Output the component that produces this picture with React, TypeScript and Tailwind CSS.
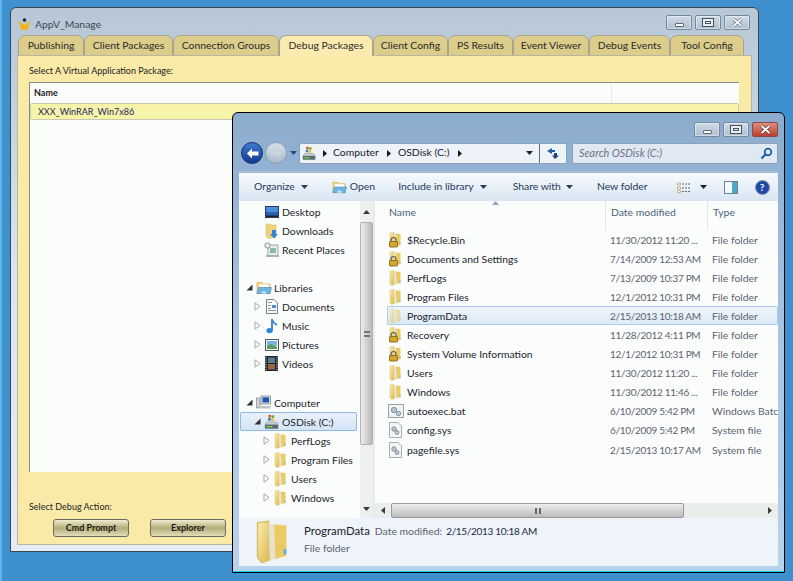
import React from "react";

const font = { fontFamily: 'Lato, "Open Sans", sans-serif' };

function Folder({ size = 16, faded = false, lock = false }: { size?: number; faded?: boolean; lock?: boolean }) {
  return (
    <svg width={size} height={size} viewBox="0 0 16 16" className="shrink-0" style={{ opacity: faded ? 0.55 : 1 }}>
      <defs>
        <linearGradient id="fg" x1="0" y1="0" x2="1" y2="1">
          <stop offset="0" stopColor="#fbeeb0" />
          <stop offset="1" stopColor="#dcb64a" />
        </linearGradient>
      </defs>
      <path d="M2 1 L6 0.5 L6.5 14.5 L3.5 15.5 L2 13.5 Z" fill="url(#fg)" stroke="#d8bd6a" strokeWidth="0.5" />
      <path d="M6 1.5 L8 1.5 L8.5 14 L6.5 14.7 Z" fill="#e6e2cc" />
      <path d="M8 1.5 L12.5 2 L12.5 13 L8.5 14.2 Z" fill="#ecca62" />
      <rect x="11.5" y="10.5" width="1" height="2" fill="#5db6e8" />
      {lock && (
        <g>
          <path d="M3 9.5 V8 a2.5 2.5 0 0 1 5 0 V9.5" fill="none" stroke="#5a5a4a" strokeWidth="1.2" />
          <rect x="1.5" y="9.5" width="8" height="5.5" rx="0.5" fill="#d8a52a" stroke="#6b5312" strokeWidth="0.7" />
        </g>
      )}
    </svg>
  );
}

function OpenFolder({ size = 16 }: { size?: number }) {
  return (
    <svg width={size} height={size} viewBox="0 0 16 16" className="shrink-0">
      <path d="M1 2.5 H6 L7 4 H14 V13.5 H1 Z" fill="#f1d67c" stroke="#c9a74a" strokeWidth="0.6" />
      <rect x="3" y="4.5" width="10" height="3" fill="#fff" />
      <path d="M1 13.5 L2.5 7.5 H15.5 L14 13.5 Z" fill="#6fb5e6" stroke="#3e86bd" strokeWidth="0.6" />
      <path d="M5 13.5 Q8 9 11 13.5 Z" fill="#cfe8f8" />
    </svg>
  );
}

function Drive({ size = 18 }: { size?: number }) {
  return (
    <svg width={size} height={size} viewBox="0 0 18 18" className="shrink-0">
      <rect x="5" y="1" width="3" height="3" fill="#e2552a" />
      <rect x="8.5" y="1.5" width="3" height="3" fill="#6fae2d" />
      <rect x="4.5" y="4.5" width="3" height="3" fill="#2f7dd1" />
      <rect x="8" y="5" width="3" height="3" fill="#eebb23" />
      <path d="M3 9 H14 L16 12 H1 Z" fill="#c8ced2" stroke="#7c858a" strokeWidth="0.5" />
      <rect x="1" y="12" width="15" height="4.5" rx="0.5" fill="#5c6b71" />
      <rect x="2.5" y="13.5" width="7" height="1.5" fill="#79d145" />
    </svg>
  );
}

function Desktop() {
  return (
    <svg width="14" height="12" viewBox="0 0 14 12" className="shrink-0">
      <rect x="0.5" y="0.5" width="13" height="11" fill="#2a62b3" stroke="#2c3a52" />
      <rect x="1" y="1" width="12" height="5" fill="#4c8fdc" />
      <rect x="1" y="9.5" width="12" height="1.5" fill="#1c2433" />
    </svg>
  );
}

function Downloads() {
  return (
    <svg width="14" height="16" viewBox="0 0 14 16" className="shrink-0">
      <path d="M1 1 H5 L6 2 H11 V14 L3 15.5 L1 13 Z" fill="#ecd27a" stroke="#cdb15c" strokeWidth="0.5" />
      <path d="M7 7 H11 V11 H13 L9 15.5 L5 11 H7 Z" fill="#2f83d2" />
    </svg>
  );
}

function Recent() {
  return (
    <svg width="16" height="16" viewBox="0 0 16 16" className="shrink-0">
      <rect x="4" y="3" width="10" height="11" fill="#e7ecef" stroke="#9aa5ab" />
      <rect x="6" y="6" width="6" height="5" fill="#8fb9a5" />
      <circle cx="3.5" cy="3.5" r="2.6" fill="#eef2f3" stroke="#7f8a90" />
      <rect x="2" y="13" width="13" height="2" fill="#a9b3b8" />
    </svg>
  );
}

function Doc() {
  return (
    <svg width="12" height="15" viewBox="0 0 12 15" className="shrink-0">
      <path d="M0.5 0.5 H8 L11.5 4 V14.5 H0.5 Z" fill="#f7f8fa" stroke="#77808a" />
      <rect x="2" y="3" width="4" height="1" fill="#8a939b" />
      <rect x="6" y="6" width="4" height="3" fill="#4d8ed0" />
      <rect x="2" y="6" width="3" height="1" fill="#8a939b" />
      <rect x="2" y="9" width="3" height="1" fill="#8a939b" />
      <rect x="2" y="11" width="8" height="1" fill="#8a939b" />
    </svg>
  );
}

function Music() {
  return (
    <svg width="12" height="16" viewBox="0 0 12 16" className="shrink-0">
      <path d="M6 1 V12" stroke="#2266b8" strokeWidth="1.6" />
      <path d="M6 1 Q7 5 11 7" stroke="#3a8ad8" strokeWidth="1.6" fill="none" />
      <ellipse cx="3.6" cy="12.6" rx="3.2" ry="2.6" fill="#2f86d8" />
    </svg>
  );
}

function Pictures() {
  return (
    <svg width="14" height="12" viewBox="0 0 14 12" className="shrink-0">
      <rect x="0.5" y="0.5" width="13" height="11" fill="#f3f5f6" stroke="#4f5a63" />
      <rect x="2" y="2" width="10" height="5" fill="#7fb4e0" />
      <path d="M2 10 V7 L6 5 L12 8 V10 Z" fill="#5c9a58" />
    </svg>
  );
}

function Videos() {
  return (
    <svg width="13" height="15" viewBox="0 0 13 15" className="shrink-0">
      <rect x="0" y="0" width="13" height="15" fill="#1d2530" />
      <rect x="3" y="1.5" width="7" height="5.5" fill="#5c7e8c" />
      <rect x="3" y="8" width="7" height="5.5" fill="#a0653c" />
      <path d="M1 1 V14 M12 1 V14" stroke="#e6e6e6" strokeWidth="1" strokeDasharray="1.2 1.2" />
    </svg>
  );
}

function Computer() {
  return (
    <svg width="15" height="15" viewBox="0 0 15 15" className="shrink-0">
      <rect x="5" y="1" width="9.5" height="8" fill="#dfe4e7" stroke="#59646b" strokeWidth="0.6" />
      <rect x="6.5" y="2.3" width="6.5" height="5.2" fill="#1d55b4" />
      <rect x="0.5" y="3" width="3.5" height="10" fill="#cfd4d6" stroke="#70797f" strokeWidth="0.6" />
      <rect x="5" y="11" width="9.5" height="2.5" fill="#bdc3c6" />
    </svg>
  );
}

function FileBat() {
  return (
    <svg width="16" height="16" viewBox="0 0 16 16" className="shrink-0">
      <rect x="0.5" y="1.5" width="15" height="13" fill="#f0f2f4" stroke="#98a2a9" />
      <circle cx="6" cy="7" r="2.6" fill="#b9c7d1" stroke="#7e8e98" />
      <circle cx="10.5" cy="10.5" r="2.2" fill="#c4d0d8" stroke="#7e8e98" />
    </svg>
  );
}

function FileSys() {
  return (
    <svg width="13" height="16" viewBox="0 0 13 16" className="shrink-0">
      <path d="M0.5 0.5 H9 L12.5 4 V15.5 H0.5 Z" fill="#f4f5f7" stroke="#a4adb3" />
      <circle cx="5" cy="7" r="2.2" fill="#bcc8d2" stroke="#7e8e98" />
      <circle cx="8" cy="10.5" r="1.9" fill="#c4d0d8" stroke="#7e8e98" />
    </svg>
  );
}

function TreeArrow({ open = false }: { open?: boolean }) {
  return (
    <svg width="7" height="9" viewBox="0 0 7 9" className="shrink-0">
      {open ? (
        <path d="M6.5 1.5 V7.5 H0.5 Z" fill="#333" />
      ) : (
        <path d="M1 0.8 L6 4.5 L1 8.2 Z" fill="#fff" stroke="#a6a6a6" />
      )}
    </svg>
  );
}

function Caret({ color = "#2a3d5a" }: { color?: string }) {
  return (
    <svg width="7" height="4" viewBox="0 0 7 4" className="shrink-0">
      <path d="M0 0 H7 L3.5 4 Z" fill={color} />
    </svg>
  );
}

function Chevron() {
  return (
    <svg width="4" height="7" viewBox="0 0 4 7" className="shrink-0">
      <path d="M0 0 L4 3.5 L0 7 Z" fill="#1b1b1b" />
    </svg>
  );
}

function Glyph({ kind, dark }: { kind: "min" | "max" | "close"; dark?: boolean }) {
  if (kind === "min")
    return <div className="mt-[5px] h-[4px] w-[9px] rounded-[1px] border border-[#5d6a78] bg-white" />;
  if (kind === "max")
    return (
      <div className="flex h-[9px] w-[12px] items-center justify-center border border-[#46525e] bg-[#e8edf2]">
        <div className="h-[3px] w-[6px] border border-[#46525e]" />
      </div>
    );
  return (
    <svg width="11" height="9" viewBox="0 0 11 9">
      <path d="M1.5 1 L9.5 8 M9.5 1 L1.5 8" stroke={dark ? "#55616d" : "#4b3030"} strokeWidth="3" />
      <path d="M1.5 1 L9.5 8 M9.5 1 L1.5 8" stroke="#fff" strokeWidth="1.8" />
    </svg>
  );
}

function CaptionButtons({ front }: { front?: boolean }) {
  const base =
    "flex items-center justify-center border border-[#75889c] bg-gradient-to-b from-[#cfdae6] to-[#aebfd0] shadow-[inset_0_0_0_1px_rgba(255,255,255,0.45)]";
  return (
    <div className="flex gap-[3px]">
      <div className={`h-[15px] w-[26px] rounded-[2px] ${base}`}>
        <Glyph kind="min" />
      </div>
      <div className={`h-[15px] w-[26px] rounded-[2px] ${base}`}>
        <Glyph kind="max" />
      </div>
      {front ? (
        <div className="flex h-[15px] w-[26px] items-center justify-center rounded-[2px] border border-[#8d4a44] bg-gradient-to-b from-[#dc8d7e] to-[#bd3c2e]">
          <Glyph kind="close" />
        </div>
      ) : (
        <div className={`h-[15px] w-[26px] rounded-[2px] ${base}`}>
          <Glyph kind="close" dark />
        </div>
      )}
    </div>
  );
}

const tabs = [
  ["Publishing", "w-[66px]"],
  ["Client Packages", "w-[89px]"],
  ["Connection Groups", "w-[106px]"],
  ["Debug Packages", "w-[94px]"],
  ["Client Config", "w-[75px]"],
  ["PS Results", "w-[65px]"],
  ["Event Viewer", "w-[76px]"],
  ["Debug Events", "w-[81px]"],
  ["Tool Config", "w-[74px]"],
] as const;

function AppWindow() {
  return (
    <div className="absolute left-[10px] top-[7px] flex h-[545px] w-[749px] flex-col rounded-t-[6px] border border-[#3c4650] bg-gradient-to-b from-[#b7c7d6] via-[#dce6f0] to-[#e4ecf4] px-[6px] pb-[6px]">
      <div className="flex h-[27px] shrink-0 items-start justify-between pr-[2px] pt-[7px]">
        <div className="flex items-center gap-[4px] pl-[1px] pt-[1px]">
          <svg width="13" height="13" viewBox="0 0 13 13">
            <circle cx="6.5" cy="2" r="1.7" fill="#222" />
            <path d="M0.5 3 L6.5 7 L12.5 3 L9.5 12 H3.5 Z" fill="#f3b516" />
          </svg>
          <span className="text-[10.4px] leading-[16px] text-[#3d4650]">AppV_Manage</span>
        </div>
        <CaptionButtons />
      </div>
      <div className="flex h-[21px] shrink-0 pl-[1px]">
        {tabs.map(([name, w]) => {
          const active = name === "Debug Packages";
          return (
            <div
              key={name}
              className={`flex items-center justify-center whitespace-nowrap rounded-t-[7px] border border-[#a8a48c] text-[10.4px] text-[#2b2b2b] ${w} ${
                active ? "z-10 border-b-0 bg-[#fbebb0]" : "bg-[#dccd8a]"
              }`}
            >
              {name}
            </div>
          );
        })}
      </div>
      <div className="-mt-[1px] flex min-h-0 flex-1 flex-col border border-[#b8b6a0] bg-[#f9eaa8] px-[11px]">
        <div className="h-[26px] shrink-0 pt-[9px] text-[9px] leading-[12px] text-[#222]">
          Select A Virtual Application Package:
        </div>
        <div className="flex h-[390px] w-[710px] shrink-0 flex-col border-l border-t border-[#8c8c88] bg-[#fbfdfb]">
          <div className="flex h-[20px] shrink-0 items-center">
            <div className="w-[581px] pl-[4px] text-[9px] font-bold leading-[12px] text-[#222]">Name</div>
            <div className="h-full border-l border-[#e8e8e4]" />
          </div>
          <div className="flex h-[17px] shrink-0 items-center rounded-[2px] border border-[#c8c8b4] bg-[#f7f3a8] pl-[7px] text-[9px] leading-[12px] text-[#26265c]">
            XXX_WinRAR_Win7x86
          </div>
        </div>
        <div className="h-[29px] shrink-0" />
        <div className="text-[9px] leading-[12px] text-[#222]">Select Debug Action:</div>
        <div className="mt-[6px] flex gap-[21px] pl-[24px]">
          {["Cmd Prompt", "Explorer"].map((b) => (
            <div
              key={b}
              className="flex h-[18px] w-[76px] items-center justify-center rounded-[3px] border border-[#6b6b60] bg-gradient-to-b from-[#f2eed2] via-[#b5ad78] to-[#e3ddb8] text-[9px] font-bold text-[#1a1a1a]"
            >
              {b}
            </div>
          ))}
        </div>
      </div>
    </div>
  );
}

function NavRow({ indent, arrow, icon, label, selected }: { indent: string; arrow?: "open" | "closed"; icon: React.ReactNode; label: string; selected?: boolean }) {
  return (
    <div
      className={`flex h-[19px] items-center text-[10.4px] leading-[16px] text-[#1c1c2a] ${indent} ${
        selected ? "mr-[3px] rounded-[2px] bg-gradient-to-b from-[#eaf2fa] to-[#d2e3f4] shadow-[inset_0_0_0_1px_#8fb9e0]" : ""
      }`}
    >
      <div className="flex w-[9px] shrink-0 items-center">{arrow && <TreeArrow open={arrow === "open"} />}</div>
      <div className="flex w-[17px] shrink-0 items-center justify-center">{icon}</div>
      <span className="ml-[2px] whitespace-nowrap">{label}</span>
    </div>
  );
}

function ScrollArrow({ dir }: { dir: "up" | "down" | "left" | "right" }) {
  const d = { up: "M0 4 L3.5 0 L7 4 Z", down: "M0 0 H7 L3.5 4 Z", left: "M4 0 V7 L0 3.5 Z", right: "M0 0 V7 L4 3.5 Z" }[dir];
  const horizontal = dir === "left" || dir === "right";
  return (
    <svg width={horizontal ? 4 : 7} height={horizontal ? 7 : 4} viewBox={horizontal ? "0 0 4 7" : "0 0 7 4"}>
      <path d={d} fill="#3a3a3a" />
    </svg>
  );
}

function NavPane() {
  return (
    <div className="flex w-[134px] shrink-0 bg-[#fbfdfc]">
      <div className="min-w-0 flex-1 pl-[1px] pt-[1px]">
        <NavRow indent="pl-[14px]" icon={<Desktop />} label="Desktop" />
        <NavRow indent="pl-[14px]" icon={<Downloads />} label="Downloads" />
        <NavRow indent="pl-[14px]" icon={<Recent />} label="Recent Places" />
        <div className="h-[19px]" />
        <NavRow indent="pl-[6px]" arrow="open" icon={<OpenFolder />} label="Libraries" />
        <NavRow indent="pl-[14px]" arrow="closed" icon={<Doc />} label="Documents" />
        <NavRow indent="pl-[14px]" arrow="closed" icon={<Music />} label="Music" />
        <NavRow indent="pl-[14px]" arrow="closed" icon={<Pictures />} label="Pictures" />
        <NavRow indent="pl-[14px]" arrow="closed" icon={<Videos />} label="Videos" />
        <div className="h-[20px]" />
        <NavRow indent="pl-[6px]" arrow="open" icon={<Computer />} label="Computer" />
        <NavRow indent="pl-[14px]" arrow="open" icon={<Drive size={16} />} label="OSDisk (C:)" selected />
        <NavRow indent="pl-[23px]" arrow="closed" icon={<Folder />} label="PerfLogs" />
        <NavRow indent="pl-[23px]" arrow="closed" icon={<Folder />} label="Program Files" />
        <NavRow indent="pl-[23px]" arrow="closed" icon={<Folder />} label="Users" />
        <NavRow indent="pl-[23px]" arrow="closed" icon={<Folder />} label="Windows" />
      </div>
      <div className="flex w-[13px] shrink-0 flex-col items-center bg-[#eef0ee]">
        <div className="flex h-[21px] shrink-0 items-center justify-center">
          <ScrollArrow dir="up" />
        </div>
        <div className="flex h-[223px] w-[13px] shrink-0 items-center justify-center rounded-[2px] border border-[#b0b0b0] bg-gradient-to-r from-[#eeeeee] via-[#d2d2d2] to-[#b8b8b8]">
          <div className="h-[6px] w-[6px] border-y-2 border-[#777]" />
        </div>
        <div className="flex-1" />
        <div className="flex h-[19px] shrink-0 items-center justify-center">
          <ScrollArrow dir="down" />
        </div>
      </div>
    </div>
  );
}

const files: { name: string; date: string; type: string; icon: React.ReactNode; selected?: boolean }[] = [
  { name: "$Recycle.Bin", date: "11/30/2012 11:20 ...", type: "File folder", icon: <Folder lock /> },
  { name: "Documents and Settings", date: "7/14/2009 12:53 AM", type: "File folder", icon: <Folder lock /> },
  { name: "PerfLogs", date: "7/13/2009 10:37 PM", type: "File folder", icon: <Folder /> },
  { name: "Program Files", date: "12/1/2012 10:31 PM", type: "File folder", icon: <Folder /> },
  { name: "ProgramData", date: "2/15/2013 10:18 AM", type: "File folder", icon: <Folder faded />, selected: true },
  { name: "Recovery", date: "11/28/2012 4:11 PM", type: "File folder", icon: <Folder lock /> },
  { name: "System Volume Information", date: "12/1/2012 10:31 PM", type: "File folder", icon: <Folder lock /> },
  { name: "Users", date: "11/30/2012 11:20 ...", type: "File folder", icon: <Folder /> },
  { name: "Windows", date: "11/30/2012 11:46 ...", type: "File folder", icon: <Folder /> },
  { name: "autoexec.bat", date: "6/10/2009 5:42 PM", type: "Windows Batch File", icon: <FileBat /> },
  { name: "config.sys", date: "6/10/2009 5:42 PM", type: "System file", icon: <FileSys /> },
  { name: "pagefile.sys", date: "2/15/2013 10:17 AM", type: "System file", icon: <FileSys /> },
];

function FileList() {
  return (
    <div className="flex min-w-0 flex-1 flex-col bg-[#fbfdfc]">
      <div className="relative flex h-[29px] shrink-0 items-start text-[10.4px] text-[#4c607a]">
        <div className="w-[230px] pl-[14px] pt-[4px]">Name</div>
        <div className="h-full border-l border-[#e2e6ea]" />
        <div className="w-[101px] pl-[5px] pt-[4px]">Date modified</div>
        <div className="h-full border-l border-[#e2e6ea]" />
        <div className="pl-[5px] pt-[4px]">Type</div>
        <svg width="7" height="4" viewBox="0 0 7 4" className="absolute left-[117px] top-0">
          <path d="M0 4 L3.5 0 L7 4 Z" fill="#8fa7bf" />
        </svg>
      </div>
      <div className="min-h-0 flex-1 pl-[12px]">
        {files.map((f) => (
          <div
            key={f.name}
            className={`flex h-[19.1px] items-center overflow-hidden whitespace-nowrap text-[10.4px] leading-[16px] ${
              f.selected ? "rounded-[2px] bg-gradient-to-b from-[#f0f6fc] to-[#dce9f6] shadow-[inset_0_0_0_1px_#a8cdec]" : ""
            }`}
          >
            <div className="flex w-[17px] shrink-0 justify-center">{f.icon}</div>
            <div className="w-[201px] shrink-0 pl-[3px] text-[#22222e]">{f.name}</div>
            <div className="w-[102px] shrink-0 pl-[5px] text-[10px] tracking-[-0.3px] text-[#5c6270]">{f.date}</div>
            <div className="pl-[5px] text-[#5c6270]">{f.type}</div>
          </div>
        ))}
      </div>
      <div className="flex h-[15px] shrink-0 items-center bg-[#e9eeea]">
        <div className="flex w-[16px] shrink-0 justify-center">
          <ScrollArrow dir="left" />
        </div>
        <div className="flex h-[15px] w-[293px] shrink-0 items-center justify-center rounded-[2px] border border-[#9a9a9a] bg-gradient-to-b from-[#eeeeee] to-[#bcbcbc]">
          <div className="h-[6px] w-[6px] border-x-2 border-[#666]" />
        </div>
        <div className="flex-1" />
        <div className="flex w-[16px] shrink-0 justify-center">
          <ScrollArrow dir="right" />
        </div>
      </div>
    </div>
  );
}

function ExplorerWindow() {
  return (
    <div className="absolute left-[232px] top-[112px] flex h-[461px] w-[553px] flex-col rounded-t-[6px] border-[1.5px] border-black bg-gradient-to-b from-[#8cacce] via-[#a9c5e2] to-[#b9d2ec] px-[6px] pb-[6px] shadow-[inset_0_-1px_0_#19d3e8]">
      <div className="flex h-[29px] shrink-0 items-start justify-end pt-[9px]">
        <CaptionButtons front />
      </div>
      <div className="flex h-[22px] shrink-0 items-center">
        <div className="flex w-[60px] shrink-0 items-center gap-[2px] pl-[2px]">
          <div className="flex h-[22px] w-[22px] items-center justify-center rounded-full border border-[#10306e] bg-gradient-to-b from-[#3f78d4] to-[#123a8e]">
            <svg width="13" height="11" viewBox="0 0 13 11">
              <path d="M6 0.5 L1 5.5 L6 10.5 V7.5 H12.5 V3.5 H6 Z" fill="#fff" />
            </svg>
          </div>
          <div className="flex h-[22px] w-[22px] items-center justify-center rounded-full border border-[#8c9fb4] bg-gradient-to-b from-[#d6e0ea] to-[#a9bbce]">
            <svg width="13" height="11" viewBox="0 0 13 11">
              <path d="M7 0.5 L12 5.5 L7 10.5 V7.5 H0.5 V3.5 H7 Z" fill="#c7d3df" />
            </svg>
          </div>
          <div className="ml-[1px]">
            <Caret color="#1e4e86" />
          </div>
        </div>
        <div className="flex h-[21px] min-w-0 flex-1 items-center rounded-[2px] border border-[#8ba2ba] bg-[#eef3f9] text-[10.4px] text-[#1a1a2a]">
          <div className="ml-[2px]">
            <Drive size={15} />
          </div>
          <div className="ml-[6px]">
            <Chevron />
          </div>
          <span className="ml-[6px]">Computer</span>
          <div className="ml-[8px]">
            <Chevron />
          </div>
          <span className="ml-[7px]">OSDisk (C:)</span>
          <div className="ml-[9px]">
            <Chevron />
          </div>
          <div className="flex-1" />
          <Caret color="#14233d" />
          <div className="ml-[6px] h-full border-l border-[#5f6f80]" />
          <div className="flex w-[26px] justify-center">
            <svg width="14" height="13" viewBox="0 0 14 13">
              <path d="M6 1 L1 4 L6 7 V5 H9 V3 H6 Z" fill="#1f5fa8" />
              <path d="M9 12 L13 8.5 L11 8.5 V6 H8 V8.5 H6 Z" fill="#28466e" />
            </svg>
          </div>
        </div>
        <div className="ml-[5px] flex h-[21px] w-[206px] shrink-0 items-center justify-between rounded-[2px] border border-[#8ba2ba] bg-[#dfe8f3] pl-[6px] pr-[4px] text-[10.8px] italic text-[#6c7683]">
          <span>Search OSDisk (C:)</span>
          <svg width="13" height="13" viewBox="0 0 13 13">
            <circle cx="8" cy="5" r="3.3" fill="none" stroke="#1d5fa8" strokeWidth="1.8" />
            <path d="M5.5 7.5 L1.5 11.5" stroke="#1d5fa8" strokeWidth="2" />
          </svg>
        </div>
      </div>
      <div className="h-[7px] shrink-0" />
      <div className="flex min-h-0 flex-1 flex-col border-t-2 border-[#a4bcd4]">
        <div className="flex h-[28px] shrink-0 items-center whitespace-nowrap bg-gradient-to-b from-[#f6fafe] via-[#e8f0f8] to-[#d9e5f2] text-[10.4px] text-[#1e3a5c]">
          <span className="ml-[15px]">Organize</span>
          <div className="ml-[6px]">
            <Caret />
          </div>
          <div className="ml-[24px]">
            <OpenFolder size={15} />
          </div>
          <span className="ml-[3px]">Open</span>
          <span className="ml-[23px]">Include in library</span>
          <div className="ml-[6px]">
            <Caret />
          </div>
          <span className="ml-[26px]">Share with</span>
          <div className="ml-[5px]">
            <Caret />
          </div>
          <span className="ml-[24px]">New folder</span>
          <svg width="14" height="11" viewBox="0 0 14 11" className="ml-[29px]">
            <path d="M0.5 1 h3 v2 h-3 z M0.5 5 h3 v2 h-3 z M0.5 8.5 h3 v2 h-3 z" fill="#fff" stroke="#b0893e" strokeWidth="0.6" />
            <path d="M5 2 H14 M5 6 H14 M5 9.5 H14" stroke="#5c6f86" strokeDasharray="2 1" />
          </svg>
          <div className="ml-[9px]">
            <Caret color="#14233d" />
          </div>
          <svg width="14" height="13" viewBox="0 0 14 13" className="ml-[17px]">
            <rect x="0.5" y="0.5" width="13" height="12" fill="#f6f9fb" stroke="#6e7f8e" />
            <rect x="8" y="1" width="5" height="11" fill="#4fa6c8" />
          </svg>
          <div className="ml-[17px] flex h-[15px] w-[15px] items-center justify-center rounded-full border border-[#8a97a6] bg-[#2048a8] text-[10px] font-bold text-white">
            ?
          </div>
        </div>
        <div className="flex min-h-0 flex-1">
          <NavPane />
          <div className="w-[2px] shrink-0 bg-[#e6ebee]" />
          <FileList />
        </div>
        <div className="flex h-[48px] shrink-0 items-start bg-[#eff3fa] pt-[1px]">
          <div className="ml-[13px] mt-[1px] w-[52px] shrink-0">
            <Folder size={44} />
          </div>
          <div className="pt-[3px] text-[10.4px] leading-[17px]">
            <div className="flex items-baseline whitespace-nowrap">
              <span className="text-[11.4px] text-[#1c1c2a]">ProgramData</span>
              <span className="ml-[5px] text-[#5c6270]">Date modified:</span>
              <span className="ml-[4px] text-[10px] tracking-[-0.3px] text-[#1c2a4a]">2/15/2013 10:18 AM</span>
            </div>
            <div className="text-[#5c6270]">File folder</div>
          </div>
        </div>
      </div>
    </div>
  );
}

export default function App() {
  return (
    <div className="relative h-[581px] w-[793px] overflow-hidden bg-[#3f90cf]" style={font}>
      <div className="absolute left-0 top-0 h-full w-[2px] bg-[#5cb5e6]" />
      <AppWindow />
      <ExplorerWindow />
    </div>
  );
}
